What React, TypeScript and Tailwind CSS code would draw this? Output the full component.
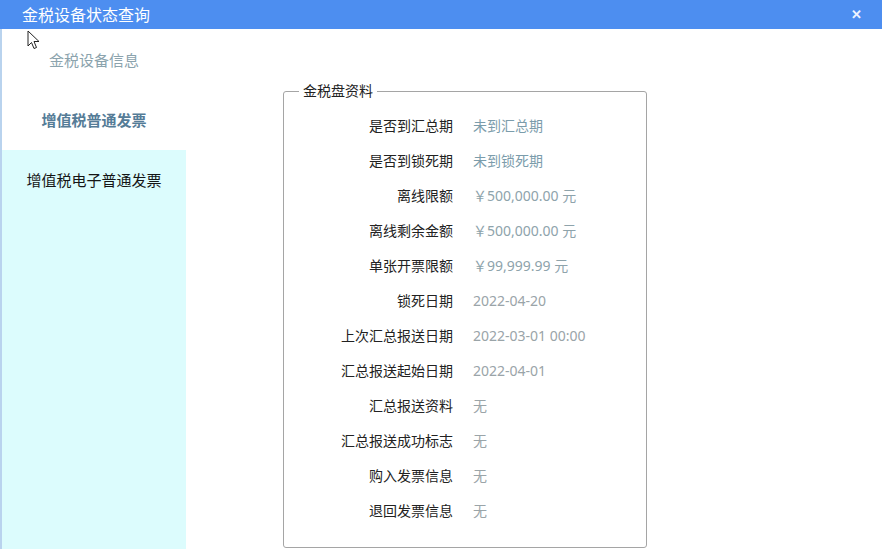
const rows: { label: string; value: string; tone: string }[] = [
  { label: "是否到汇总期", value: "未到汇总期", tone: "text-[#7b9cab]" },
  { label: "是否到锁死期", value: "未到锁死期", tone: "text-[#7b9cab]" },
  { label: "离线限额", value: "￥500,000.00 元", tone: "text-[#8ea3ab]" },
  { label: "离线剩余金额", value: "￥500,000.00 元", tone: "text-[#8ea3ab]" },
  { label: "单张开票限额", value: "￥99,999.99 元", tone: "text-[#8ea3ab]" },
  { label: "锁死日期", value: "2022-04-20", tone: "text-[#9aa4a8]" },
  { label: "上次汇总报送日期", value: "2022-03-01 00:00", tone: "text-[#9aa4a8]" },
  { label: "汇总报送起始日期", value: "2022-04-01", tone: "text-[#9aa4a8]" },
  { label: "汇总报送资料", value: "无", tone: "text-[#9aa4a8]" },
  { label: "汇总报送成功标志", value: "无", tone: "text-[#9aa4a8]" },
  { label: "购入发票信息", value: "无", tone: "text-[#9aa4a8]" },
  { label: "退回发票信息", value: "无", tone: "text-[#9aa4a8]" },
];

export default function App() {
  return (
    <div
      className="relative w-[882px] h-[549px] overflow-hidden bg-white flex flex-col"
      style={{ fontFamily: '"Noto Sans", "Noto Sans CJK SC", sans-serif' }}
    >
      {/* title bar */}
      <div className="h-[29px] shrink-0 bg-[#4d8ef0] flex items-center justify-between pl-[22px] pr-[20px]">
        <span className="text-white text-[16px] leading-none">金税设备状态查询</span>
        <span className="text-[#eef4ff] text-[13px] font-bold leading-none">✕</span>
      </div>

      <div className="flex flex-1 min-h-0">
        {/* sidebar tabs */}
        <div className="w-[186px] shrink-0 flex flex-col border-l-[2px] border-[#b9d3ee]">
          <div className="h-[62px] flex items-center justify-center text-[15px] text-[#8ba3ad]">金税设备信息</div>
          <div className="h-[59px] flex items-center justify-center text-[15px] font-semibold text-[#557c97]">增值税普通发票</div>
          <div className="flex-1 bg-[#dcfcfd]">
            <div className="h-[60px] flex items-center justify-center text-[15px] text-[#151515]">增值税电子普通发票</div>
          </div>
        </div>

        {/* content */}
        <div className="flex-1 pl-[97px] pt-[52px]">
          <fieldset className="w-[364px] h-[467px] border border-[#a5a5a5] rounded-[3px] pl-0">
            <legend className="ml-[15px] px-[4px] text-[14px] leading-[20px] text-[#222]">金税盘资料</legend>
            <div className="pt-[7px] flex flex-col">
              {rows.map((r) => (
                <div key={r.label} className="h-[35px] flex items-center text-[14px]">
                  <span className="w-[169px] text-right text-[#222]">{r.label}</span>
                  <span className={`ml-[20px] ${r.tone}`}>{r.value}</span>
                </div>
              ))}
            </div>
          </fieldset>
        </div>
      </div>

      {/* mouse cursor */}
      <svg className="absolute left-[27px] top-[30px]" width="13" height="20" viewBox="0 0 13 20">
        <path d="M1 1 L1 16 L4.5 12.5 L7 18.5 L9.5 17.5 L7 11.5 L12 11.5 Z" fill="#fff" stroke="#222" strokeWidth="1" strokeLinejoin="round" />
      </svg>
    </div>
  );
}
